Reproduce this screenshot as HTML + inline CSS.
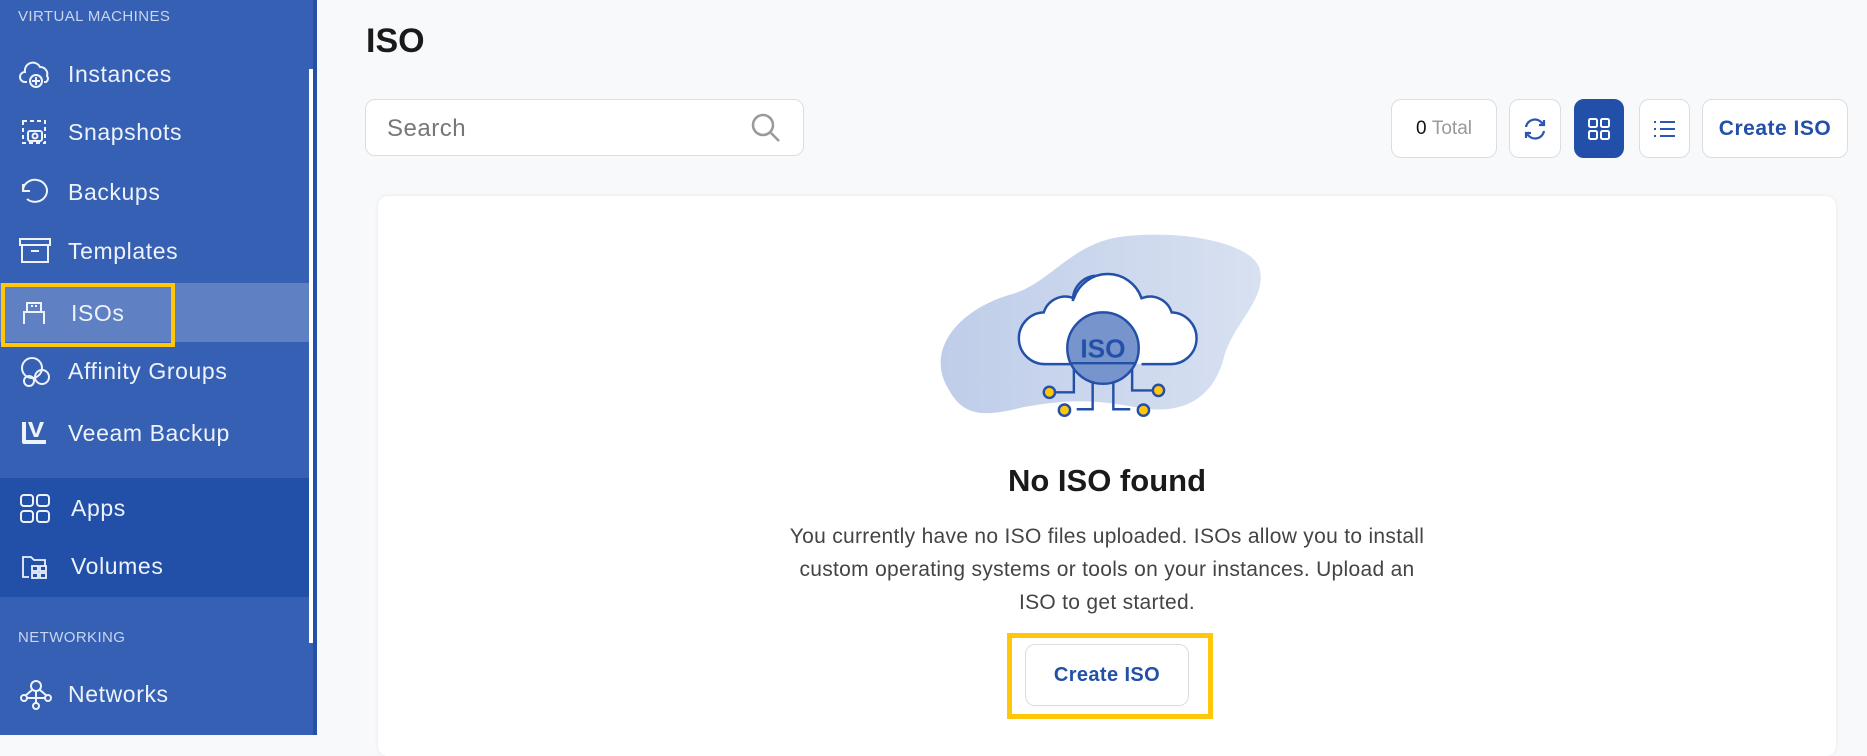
<!DOCTYPE html>
<html><head><meta charset="utf-8"><style>
*{margin:0;padding:0;box-sizing:border-box}
body{width:1867px;height:735px;overflow:hidden;background:#f8f9fb;font-family:"Liberation Sans",sans-serif;position:relative}
.sb{position:absolute;left:0;top:0;width:317px;height:735px;background:#3560b3}
.sb .strip{position:absolute;left:313px;top:0;width:4px;height:735px;background:#2450a8}
.sb .scr{position:absolute;left:309px;top:69px;width:4px;height:574px;background:#fff}
.lbl{position:absolute;left:18px;font-size:15px;color:#c9d6ee;letter-spacing:.4px}
.it{position:absolute;left:0;width:309px;height:60px;display:flex;align-items:center;color:#eef2fb;font-size:23px;letter-spacing:.6px}
.it svg{position:absolute;left:19px;top:15px}
.it span{position:absolute;left:68px}
.dark{position:absolute;left:0;top:478px;width:309px;height:119px;background:#2250a8}
.hl{position:absolute;left:0;top:283px;width:309px;height:59px;background:#5f80c2}
.yb{position:absolute;border:4px solid #ffc60a}
.title{position:absolute;left:366px;top:22px;font-size:34px;font-weight:bold;color:#1a1a1a}
.search{position:absolute;left:365px;top:99px;width:439px;height:57px;border:1px solid #dcdde2;border-radius:10px;background:#fff}
.search span{position:absolute;left:21px;top:15px;font-size:24px;color:#777;letter-spacing:.5px}
.btn{position:absolute;top:99px;height:59px;border:1px solid #dcdde2;border-radius:10px;background:#fff;display:flex;align-items:center;justify-content:center}
.card{position:absolute;left:378px;top:196px;width:1458px;height:560px;background:#fff;border-radius:10px;box-shadow:0 0 4px rgba(0,0,0,.08)}
.c{position:absolute;left:0;width:100%;text-align:center}
</style></head><body>
<div class="sb">
<div class="hl"></div><div class="dark"></div>
<div class="scr"></div><div class="strip"></div>
<div class="lbl" style="top:8px">VIRTUAL MACHINES</div>
<div class="it" style="top:44px"><svg width="34" height="30" viewBox="0 0 34 30" fill="none" stroke="#eef2fb" stroke-width="2"><path d="M8 23H6a5 5 0 0 1 0-10 8 8 0 0 1 15-5 7 7 0 0 1 7 9 4 4 0 0 1-1 6h-2"/><circle cx="17" cy="22" r="6"/><path d="M17 18v8M13 22h8"/></svg><span>Instances</span></div>
<div class="it" style="top:102px"><svg width="30" height="30" viewBox="0 0 30 30" fill="none" stroke="#eef2fb" stroke-width="2"><path d="M4 4h22v22H4z" stroke-dasharray="4 3"/><rect x="9" y="14" width="14" height="10" rx="2"/><circle cx="16" cy="19" r="2.5"/></svg><span>Snapshots</span></div>
<div class="it" style="top:162px"><svg width="30" height="30" viewBox="0 0 30 30" fill="none" stroke="#eef2fb" stroke-width="2"><path d="M4 14a12 11 0 1 1 4 8"/><path d="M4 7v7h7"/></svg><span>Backups</span></div>
<div class="it" style="top:221px"><svg width="32" height="30" viewBox="0 0 32 30" fill="none" stroke="#eef2fb" stroke-width="2"><rect x="1" y="3" width="30" height="6"/><path d="M3 9v17h26V9M12 15h8"/></svg><span>Templates</span></div>
<div class="it" style="top:283px"><svg width="30" height="30" viewBox="0 0 30 30" fill="none" stroke="#eef2fb" stroke-width="2"><path d="M5 26V14h20v12M8 14V5h14v9"/><path d="M12 8h2M16 8h2"/></svg><span style="left:71px">ISOs</span></div>
<div class="it" style="top:341px"><svg width="34" height="32" viewBox="0 0 34 32" fill="none" stroke="#eef2fb" stroke-width="2"><circle cx="13" cy="12" r="10"/><circle cx="23" cy="21" r="7"/><circle cx="10" cy="25" r="5"/></svg><span>Affinity Groups</span></div>
<div class="it" style="top:403px"><svg width="30" height="30" viewBox="0 0 30 30" fill="#eef2fb"><path d="M3 4h4v18h20v4H5a2 2 0 0 1-2-2z"/><path d="M9 4h4l4 12 4-12h4l-6 15h-4z"/></svg><span>Veeam Backup</span></div>
<div class="it" style="top:478px"><svg width="32" height="32" viewBox="0 0 32 32" fill="none" stroke="#eef2fb" stroke-width="2"><rect x="2" y="2" width="12" height="11" rx="3"/><rect x="18" y="2" width="12" height="11" rx="3"/><rect x="2" y="18" width="12" height="11" rx="3"/><rect x="18" y="18" width="12" height="11" rx="3"/></svg><span style="left:71px">Apps</span></div>
<div class="it" style="top:536px"><svg width="30" height="30" viewBox="0 0 30 30" fill="none" stroke="#eef2fb" stroke-width="1.8"><path d="M10 26H4V6h8l3 3h11v6"/><rect x="13" y="15" width="6" height="5"/><rect x="21" y="15" width="6" height="5"/><rect x="13" y="22" width="6" height="5"/><rect x="21" y="22" width="6" height="5"/></svg><span style="left:71px">Volumes</span></div>
<div class="lbl" style="top:629px">NETWORKING</div>
<div class="it" style="top:664px"><svg width="34" height="32" viewBox="0 0 34 32" fill="none" stroke="#eef2fb" stroke-width="2"><circle cx="17" cy="7" r="5"/><circle cx="5" cy="19" r="3"/><circle cx="29" cy="19" r="3"/><circle cx="17" cy="27" r="3"/><path d="M8 19h18M17 12v12M13 11l-7 6M21 11l7 6"/></svg><span>Networks</span></div>
</div>
<div class="yb" style="left:1px;top:283px;width:174px;height:64px"></div>

<div class="title">ISO</div>
<div class="search"><span>Search</span><svg style="position:absolute;left:384px;top:12px" width="32" height="32" viewBox="0 0 32 32" fill="none" stroke="#999" stroke-width="2.5"><circle cx="13" cy="13" r="10"/><path d="M21 21l8 8"/></svg></div>
<div class="btn" style="left:1391px;width:106px;font-size:19px"><b style="color:#111;font-weight:normal">0</b>&nbsp;<span style="color:#999">Total</span></div>
<div class="btn" style="left:1509px;width:52px"><svg width="26" height="26" viewBox="0 0 26 26" fill="none" stroke="#2a55b0" stroke-width="2.2"><path d="M4 11a9 9 0 0 1 16-4l2 2M22 15a9 9 0 0 1-16 4l-2-2"/><path d="M22 4v5h-5M4 22v-5h5"/></svg></div>
<div class="btn" style="left:1574px;width:50px;background:#2250a8;border-color:#2250a8"><svg width="24" height="24" viewBox="0 0 24 24" fill="none" stroke="#fff" stroke-width="2"><rect x="2" y="2" width="8" height="8" rx="1.5"/><rect x="14" y="2" width="8" height="8" rx="1.5"/><rect x="2" y="14" width="8" height="8" rx="1.5"/><rect x="14" y="14" width="8" height="8" rx="1.5"/></svg></div>
<div class="btn" style="left:1639px;width:51px"><svg width="24" height="20" viewBox="0 0 24 20" fill="none" stroke="#2a55b0" stroke-width="2"><path d="M7 3h15M7 10h15M7 17h15M1 3h2M1 10h2M1 17h2"/></svg></div>
<div class="btn" style="left:1702px;width:146px;color:#2250a8;font-weight:bold;font-size:21px;letter-spacing:.5px">Create ISO</div>

<div class="card">
<svg style="position:absolute;left:560px;top:25px" width="340" height="200" viewBox="944 221 340 200">
<defs><linearGradient id="g" x1="0" x2="1"><stop offset="0" stop-color="#bfcde9"/><stop offset="1" stop-color="#d8e1f1"/></linearGradient></defs>
<path d="M955 390c-25-40 10-80 60-95 40-10 60-50 110-58 60-8 130 5 140 30 10 30-25 55-35 90-10 40-40 60-90 50-50-10-80-5-110 0-40 10-60 10-75-17z" fill="url(#g)"/>
<g transform="translate(1109 350) scale(0.94) translate(-1101 -350)">
<g fill="none" stroke="#2350a8" stroke-width="2.6">
<path d="M1068 365h-28a27 27 0 0 1-2-55 24 24 0 0 1 32-15 38 38 0 0 1 72 0 24 24 0 0 1 32 15 27 27 0 0 1-2 55h-30" fill="#fff"/>
<path d="M1069 298a26 26 0 0 1 24-27"/>
<path d="M1070 365v30h-22M1090 380v33h-17M1112 380v33h18M1132 365v28h22"/>
</g>
<circle cx="1101" cy="348" r="38" fill="#7795cc" stroke="#2350a8" stroke-width="2.6"/>
<path d="M1066 364h70" stroke="#2350a8" stroke-width="2.6"/>
<text x="1101" y="358" text-anchor="middle" font-family="Liberation Sans" font-weight="bold" font-size="28" fill="#2350a8">ISO</text>
<g fill="#ffc60a" stroke="#2350a8" stroke-width="2.6"><circle cx="1044" cy="395" r="6"/><circle cx="1160" cy="393" r="6"/><circle cx="1060" cy="414" r="6"/><circle cx="1144" cy="414" r="6"/></g>
</g>
</svg>
<div class="c" style="top:267px;font-size:31px;font-weight:bold;color:#1a1a1a">No ISO found</div>
<div class="c" style="top:324px;font-size:21px;line-height:33px;color:#444;letter-spacing:.3px">You currently have no ISO files uploaded. ISOs allow you to install<br>custom operating systems or tools on your instances. Upload an<br>ISO to get started.</div>
<div class="btn" style="left:647px;top:448px;width:164px;height:62px;color:#2250a8;font-weight:bold;font-size:20px;letter-spacing:.4px">Create ISO</div>
</div>
<div class="yb" style="left:1007px;top:633px;width:206px;height:86px;border-width:5px"></div>
</body></html>
